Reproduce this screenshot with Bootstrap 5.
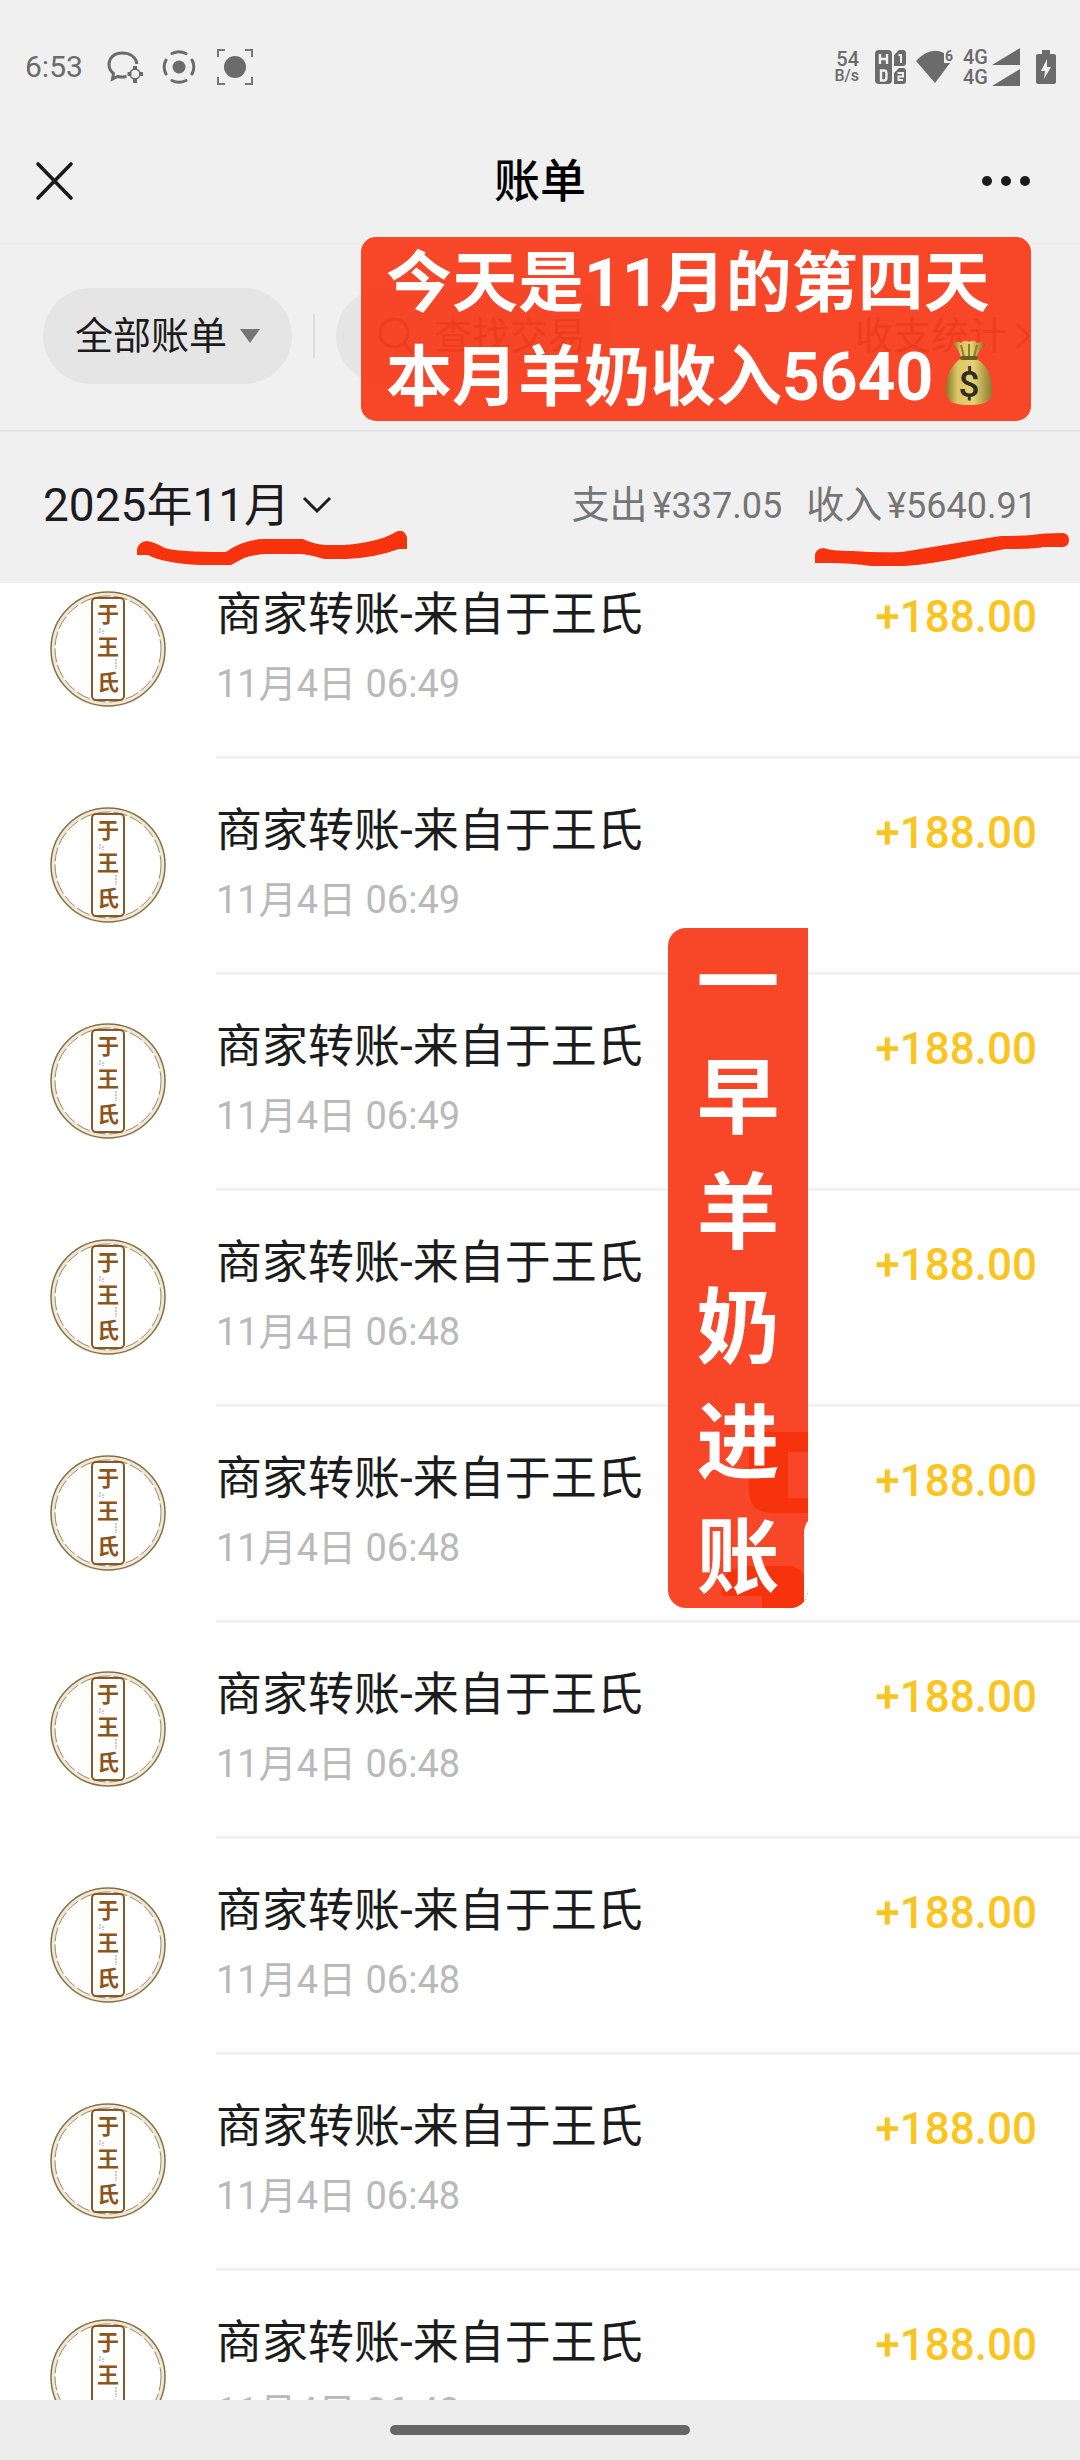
<!DOCTYPE html>
<html lang="zh-CN">
<head>
<meta charset="utf-8">
<meta name="viewport" content="width=device-width, initial-scale=1">
<title>账单</title>
<link href="https://cdn.jsdelivr.net/npm/bootstrap@5.3.0/dist/css/bootstrap.min.css" rel="stylesheet">
<style>
  body { font-family: Roboto, "Noto Sans CJK SC", sans-serif; background: #fff; color: #1c1c1c; }
  svg { display: block; flex: none; }
  .app { height: 100vh; min-height: 800px; }
  .chrome { background: #f0f0f0; }
  .status { height: 134px; padding: 0 24px 0 25px; color: #6b6b6b; }
  .clock { font-size: 30px; line-height: 36px; }
  .rate { font-size: 20px; line-height: 18px; font-weight: 500; }
  .rate small { font-size: 16px; display: block; line-height: 16px; }
  .icon-frame { margin-left: 20px; }
  .icon-gap { margin-left: 9px; }
  .sim { font-size: 20px; line-height: 20px; font-weight: 500; margin-left: 7px; }
  .titlebar { height: 110px; padding: 0 32px 16px; border-bottom: 1px solid #ebebeb; }
  .titlebar h1 { font-size: 46px; line-height: 60px; font-weight: 500; color: #000; }
  .plain { background: none; border: 0; padding: 0; color: inherit; }
  .filters { height: 188px; padding: 0 49px 2px 43px; border-bottom: 2px solid #e6e6e6; }
  .pill { background: #e5e5e5; border: 0; border-radius: 48px; height: 96px; font-size: 38px; line-height: 56px; }
  .pill-kind { padding: 0 32px; gap: 13px; color: #1c1c1c; }
  .split { width: 2px; height: 44px; background: #dcdcdc; margin: 0 21px; }
  .pill-search { width: 277px; padding: 0 20px 0 42px; gap: 20px; color: #555; }
  .pill-search input { background: none; border: 0; padding: 0; color: inherit; min-width: 0; width: 100%; }
  .pill-search input::placeholder { color: #555; opacity: 1; }
  .stats { font-size: 38px; line-height: 56px; color: #555; text-decoration: none; gap: 8px; }
  .month { height: 151px; padding: 0 43px 5px 43px; }
  .month-pick { font-size: 46px; line-height: 60px; gap: 12px; color: #1c1c1c; }
  .totals { font-size: 38px; line-height: 56px; color: #757575; gap: 24px; }
  .totals b { font-size: 36px; font-weight: 400; margin-left: 5px; }
  .marks { top: 188px; }
  .mark-month { position: absolute; left: 137px; top: 99px; }
  .mark-income { position: absolute; right: 11px; top: 101px; }
  .sticker { position: absolute; background: rgba(246, 60, 27, .94); color: #fff; font-weight: 700; z-index: 2; }
  .sticker-top { right: 49px; top: -7px; width: 670px; height: 184px; border-radius: 15px; padding: 0 25px; font-size: 66px; line-height: 94px; white-space: nowrap; }
  .money { margin: 9px 0 0 11px; }
  .sticker-side { right: 272px; top: 345px; width: 140px; height: 680px; padding-top: 6px; border-radius: 18px 0 18px 18px; font-size: 83px; line-height: 115px; overflow: hidden; }
  .sticker-side .under { position: absolute; left: 0; top: 0; }
  .sticker-side span { position: relative; }
  .bills { flex: 1 1 0; min-height: 0; overflow: hidden; }
  .bill-list { margin: -40px 0 0; }
  .bill { height: 216px; padding-left: 50px; gap: 50px; }
  .bill .face { margin-top: 48px; }
  .bill-body { border-bottom: 3px solid #f2f2f2; padding: 39px 43px 0 0; }
  .payee { font-size: 46px; line-height: 64px; font-weight: 400; margin: 0 0 10px; }
  .when { font-size: 38px; line-height: 56px; color: #b9b9b9; }
  .amount { font-size: 44px; line-height: 70px; font-weight: 500; color: #fac51e; }
  .gesture { height: 60px; background: #ededed; }
  .gesture i { width: 300px; height: 10px; border-radius: 5px; background: #666; }
</style>
<script src="https://cdn.jsdelivr.net/npm/bootstrap@5.3.0/dist/js/bootstrap.bundle.min.js"></script>
</head>
<body>
<div class="app d-flex flex-column overflow-hidden">
  <header class="chrome">
    <div class="status d-flex align-items-center">
      <span class="clock">6:53</span>
      <svg class="ms-4" width="36" height="32" viewBox="0 0 36 32" fill="none" stroke="#6b6b6b" stroke-width="3">
        <path d="M30 13C29 6 23 2 15 2 7 2 2 7 2 13.500c0 4 2 7 4.500 9L5.500 28l5-2.500c3 .7 6 .7 9 0"/>
        <circle cx="28" cy="23" r="5" stroke-width="1.500"/>
        <path d="M28 15v4M28 27v5M20.500 23h4M32 23h4" stroke-width="4"/>
      </svg>
      <svg class="ms-3" width="38" height="34" viewBox="0 0 38 34" fill="none" stroke="#6b6b6b" stroke-width="3">
        <circle cx="20" cy="17" r="6.500" fill="#6b6b6b" stroke="none"/>
        <path d="M13 3.500a16 16 0 0 1 14 0M13 30.500a16 16 0 0 0 14 0M7 10a15 15 0 0 0 0 14M33 10a15 15 0 0 1 0 14" stroke-linecap="round"/>
      </svg>
      <svg class="icon-frame" width="36" height="36" viewBox="0 0 36 36" fill="none" stroke="#777" stroke-width="2">
        <circle cx="18" cy="18" r="11" fill="#6b6b6b" stroke="none"/>
        <path d="M1 8V1h7M28 1h7v7M35 28v7h-7M8 35H1v-7"/>
      </svg>
      <span class="rate ms-auto text-end">54<small>B/s</small></span>
      <svg class="ms-3" width="32" height="34" viewBox="0 0 32 34">
        <rect width="17" height="34" rx="4" fill="#6b6b6b"/>
        <path d="M19 16V5l5-5h4q3 0 3 3v10q0 3-3 3zM19 34V23l5-5h4q3 0 3 3v10q0 3-3 3z" fill="#6b6b6b"/>
        <path d="M5 4v10M12 4v10M5 9h7M6 20.500h3q2.500 0 2.500 3v4q0 3-2.500 3H6z" fill="none" stroke="#f0f0f0" stroke-width="2.400"/>
        <path d="M23.500 5H26v8M22.500 23H28v3.500h-4.500V30H28" fill="none" stroke="#f0f0f0" stroke-width="2"/>
      </svg>
      <svg class="icon-gap" width="40" height="34" viewBox="0 0 40 34">
        <path d="M0 11Q14-4 28 3v10h6L19 33z" fill="#6b6b6b"/>
        <text x="29" y="11" font-size="14" font-weight="700" fill="#6b6b6b">6</text>
      </svg>
      <span class="sim">4G<br>4G</span>
      <svg class="ms-1" width="28" height="38" viewBox="0 0 28 38" fill="#6b6b6b"><path d="M0 17 28 0v17zM0 38 28 21v17z"/></svg>
      <svg class="ms-3" width="20" height="34" viewBox="0 0 20 34">
        <path d="M6 0h8v4h4q2 0 2 2v26q0 2-2 2H2q-2 0-2-2V6q0-2 2-2h4z" fill="#6b6b6b"/>
        <path d="M11 9 5 21h4l-1 8 7-12h-4z" fill="#f0f0f0"/>
      </svg>
    </div>

    <div class="titlebar d-flex align-items-center justify-content-between">
      <button class="plain col d-flex" type="button" aria-label="关闭">
        <svg width="44" height="44" viewBox="0 0 44 44" stroke="#1a1a1a" stroke-width="3.600" stroke-linecap="round"><path d="M6 5l33 34M39 5 6 39"/></svg>
      </button>
      <h1 class="m-0">账单</h1>
      <button class="plain col d-flex justify-content-end" type="button" aria-label="更多">
        <svg class="me-3" width="50" height="12" viewBox="0 0 50 12" fill="#1a1a1a"><circle cx="5" cy="6" r="5"/><circle cx="24" cy="6" r="5"/><circle cx="43" cy="6" r="5"/></svg>
      </button>
    </div>
  </header>

  <section class="chrome position-relative">
    <div class="filters d-flex align-items-center">
      <button class="pill pill-kind d-flex align-items-center" type="button">全部账单
        <svg width="20" height="14" viewBox="0 0 20 14"><path d="M0 0h20L10 14z" fill="#757575"/></svg>
      </button>
      <span class="split"></span>
      <label class="pill pill-search d-flex align-items-center">
        <svg width="36" height="38" viewBox="0 0 36 38" fill="none" stroke="#555" stroke-width="3"><circle cx="16" cy="16" r="14"/><path d="m26 26 9 11"/></svg>
        <input type="text" placeholder="查找交易" aria-label="查找交易">
      </label>
      <a class="stats d-flex align-items-center ms-auto" href="#">收支统计
        <svg width="16" height="28" viewBox="0 0 16 28" fill="none" stroke="#555" stroke-width="3"><path d="m2 2 12 12L2 26"/></svg>
      </a>
    </div>
    <div class="sticker sticker-top">
      <div>今天是11月的第四天</div>
      <div class="d-flex">本月羊奶收入5640
        <svg class="money" width="50" height="66" viewBox="0 0 50 66" role="img" aria-label="钱袋">
          <defs>
            <linearGradient id="cloth" x1="0" x2="1"><stop offset="0" stop-color="#8a7728"/><stop offset=".25" stop-color="#dcc767"/><stop offset=".6" stop-color="#e6d272"/><stop offset="1" stop-color="#8d7a2c"/></linearGradient>
          </defs>
          <path d="M16 19C8 25 2 34 2 50c0 10 4 15 23 15s23-5 23-15C48 34 42 25 33 19z" fill="url(#cloth)"/>
          <path d="M9 4q4-4 8-1 4-4 8-1 5-3 8 1 5-2 7 2-5 5-8 13H17Q15 9 9 4z" fill="url(#cloth)"/>
          <path d="M17 5l3 12M25 4v13M33 5l-3 12" stroke="#8f7c30" stroke-width="2"/>
          <path d="M18 18h14" stroke="#6f5c20" stroke-width="4" stroke-linecap="round"/>
          <text x="25" y="57" font-size="37" font-weight="500" text-anchor="middle" fill="#302c26">$</text>
        </svg>
      </div>
    </div>

    <div class="month d-flex align-items-center justify-content-between">
      <button class="plain month-pick d-flex align-items-center" type="button">2025年11月
        <svg width="30" height="18" viewBox="0 0 30 18" fill="none" stroke="#1c1c1c" stroke-width="3"><path d="m2 2 13 13L28 2"/></svg>
      </button>
      <div class="totals d-flex">
        <span>支出<b>¥337.05</b></span>
        <span>收入<b>¥5640.91</b></span>
      </div>
    </div>
    <div class="marks position-absolute start-0 end-0">
      <svg class="mark-month" width="270" height="35" viewBox="137 99 270 35" fill="#f7330d"><path d="M137 123v-6q2-7 9-8 6 0 19 7 12 4 61 4 16-12 37-13h40q10 5 22 6h19q34-3 50-12 9-6 13 4v12h-8q-25 9-53 10h-22q-16-5-26-5h-33q-12 1-21 4l-13 7h-31q-37-2-52-10z"/></svg>
      <svg class="mark-income" width="254" height="34" viewBox="815 101 254 34" fill="#f7330d"><path d="M815 131v-9q2-6 9-6 6 3 29 3 24 2 49 1 60-10 99-16 20 0 31-1 10-2 31-2 6 1 6 7t-6 7h-20q-6 2-38 2l-41 8q-32 7-59 9h-34q-20-3-42-3z"/></svg>
    </div>
  </section>

  <main class="bills position-relative">
    <ul class="bill-list list-unstyled" id="bills"></ul>
    <div class="sticker sticker-side d-flex flex-column align-items-center justify-content-center">
      <svg class="under" width="140" height="686" viewBox="0 0 140 686">
        <path d="M140 504H95q-14 0-14 14v44q0 23 23 23h36v-15h-20v-46h20zM81 638h38q19 0 19 22v26H94V668H55q-4-14 4-22 8-8 22-8z" fill="#f7330d"/>
        <path d="M140 593q-4 4-4 14v79h4z" fill="#fff"/>
      </svg>
      <span>一</span><span>早</span><span>羊</span><span>奶</span><span>进</span><span>账</span>
    </div>
  </main>

  <footer class="gesture d-flex align-items-center justify-content-center"><i></i></footer>
</div>

<template id="bill-row">
  <li class="bill d-flex">
    <svg class="face" width="116" height="116" viewBox="0 0 116 116" fill="none">
      <circle cx="58" cy="58" r="55" stroke="#efe8d6" stroke-width="4"/>
      <circle cx="58" cy="58" r="57" stroke="#8a6f45" stroke-width="1.500"/>
      <circle cx="58" cy="58" r="53" stroke="#9c8762" stroke-width="1" stroke-dasharray="14 3"/>
      <rect x="42" y="7" width="32" height="102" rx="4" fill="#fff" stroke="#855a28" stroke-width="2"/>
      <g font-size="22" font-weight="700" fill="#8f5518" text-anchor="middle">
        <text x="58" y="31">于</text><text x="58" y="64">王</text><text x="58" y="99">氏</text>
      </g>
      <path d="M50 37v5M53 39v4M66 68v10" stroke="#bbb" stroke-width="1.500" stroke-dasharray="2 1"/>
    </svg>
    <div class="bill-body d-flex flex-grow-1 justify-content-between">
      <div><h2 class="payee">商家转账-来自于王氏</h2><div class="when"></div></div>
      <div class="amount">+188.00</div>
    </div>
  </li>
</template>
<script>
  const times = ['06:49', '06:49', '06:49', '06:48', '06:48', '06:48', '06:48', '06:48', '06:48'];
  const list = document.getElementById('bills');
  const row = document.getElementById('bill-row');
  for (const t of times) {
    const item = row.content.cloneNode(true);
    item.querySelector('.when').textContent = '11月4日 ' + t;
    list.append(item);
  }
</script>
</body>
</html>
